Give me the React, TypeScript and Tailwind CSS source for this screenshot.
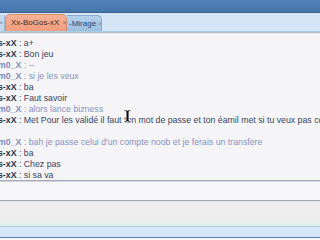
import React from 'react';

type Line = { who?: 'a' | 'b'; text?: string };

const lines: Line[] = [
  { who: 'a', text: 'a+' },
  { who: 'a', text: 'Bon jeu' },
  { who: 'b', text: '--' },
  { who: 'b', text: 'si je les veux' },
  { who: 'a', text: 'ba' },
  { who: 'a', text: 'Faut savoir' },
  { who: 'b', text: 'alors lance bizness' },
  { who: 'a', text: 'Met Pour les validé il faut ton mot de passe et ton éamil met si tu veux pas ce que je veux' },
  {},
  { who: 'b', text: 'bah je passe celui d\'un compte noob et je ferais un transfere' },
  { who: 'a', text: 'ba' },
  { who: 'a', text: 'Chez pas' },
  { who: 'a', text: 'si sa va' },
];

function ChatLine({ line }: { line: Line }) {
  if (!line.who) return <div className="h-[11px]" />;
  const a = line.who === 'a';
  return (
    <div className="h-[11px] leading-[11px] whitespace-nowrap">
      <span className={a ? 'font-bold text-[#27324f]' : 'font-bold text-[#7f8cc0]'}>
        {a ? 's-xX' : 'm0_X'}
      </span>
      <span className={a ? 'text-[#3a4460]' : 'text-[#8793c6]'}> : {line.text}</span>
    </div>
  );
}

function IBeam() {
  return (
    <svg width="9" height="14" viewBox="0 0 9 14" className="absolute left-[125px] top-[75px]">
      <path d="M1 1h3l0.5 0.5L5 1h3v1.5H6v9h2V13H5l-0.5-0.5L4 13H1v-1.5h2v-9H1z" fill="#111" stroke="#fff" strokeWidth="0.8" />
    </svg>
  );
}

export default function App() {
  return (
    <div className="w-[320px] h-[240px] overflow-hidden flex flex-col bg-[#f5f5f7] font-['Liberation_Sans',Arial,sans-serif]">
      {/* title bar */}
      <div className="h-[13px] shrink-0 bg-gradient-to-b from-[#5183b8] to-[#4676ab] border-b border-[#3a6090]" />

      {/* tab strip */}
      <div className="h-[18px] shrink-0 bg-[#d6e5f5] flex items-end text-[8px] leading-none whitespace-nowrap">
        <div className="w-[6px] h-[16px] bg-[#c3d8ec] border-r border-[#9ab6d2] flex items-center justify-end pr-[1px] text-[#7d8a9a] -ml-[1px]">×</div>
        <div className="w-[62px] h-[17px] bg-gradient-to-b from-[#f6b298] to-[#f19c7c] border border-b-0 border-[#d98a6c] rounded-t-[5px] flex items-center pl-[5px] gap-[3px] text-[#3b2a22] overflow-hidden">
          <span>Xx-BoGos-xX</span>
          <span className="text-[#8a6a60]">×</span>
        </div>
        <div className="w-[35px] h-[16px] bg-gradient-to-b from-[#b4d0ea] to-[#9cbfdf] border border-b-0 border-l-0 border-[#86a8ca] rounded-tr-[5px] flex items-center pl-[2px] gap-[2px] text-[#24487c] overflow-hidden">
          <span>-Mirage</span>
          <span className="text-[#7b8ea6]">×</span>
        </div>
      </div>
      <div className="h-px shrink-0 bg-[#a6d0e2]" />
      <div className="h-px shrink-0 bg-[#b6bec8]" />
      <div className="h-px shrink-0 bg-[#e9edf1]" />

      {/* chat */}
      <div className="relative h-[146px] shrink-0 pt-[4px] text-[8.75px] -ml-[2px] overflow-hidden">
        {lines.map((l, i) => (
          <ChatLine key={i} line={l} />
        ))}
        <IBeam />
      </div>

      <div className="h-px shrink-0 bg-[#a8aab8]" />
      <div className="h-px shrink-0 bg-[#d2d4de]" />
      <div className="h-[18px] shrink-0 bg-[#f7f6f8]" />
      <div className="h-px shrink-0 bg-[#a4a8b4]" />
      <div className="h-px shrink-0 bg-[#e2e2ea]" />

      {/* input */}
      <div className="h-[24px] shrink-0 bg-gradient-to-b from-[#efeeef] via-[#eeeeee] to-[#e2efea]" />
      <div className="h-px shrink-0 bg-[#a6cfe6]" />
      <div className="h-[10px] shrink-0 bg-[#d5e6f8]" />
      <div className="h-px shrink-0 bg-[#5a80aa]" />
    </div>
  );
}
